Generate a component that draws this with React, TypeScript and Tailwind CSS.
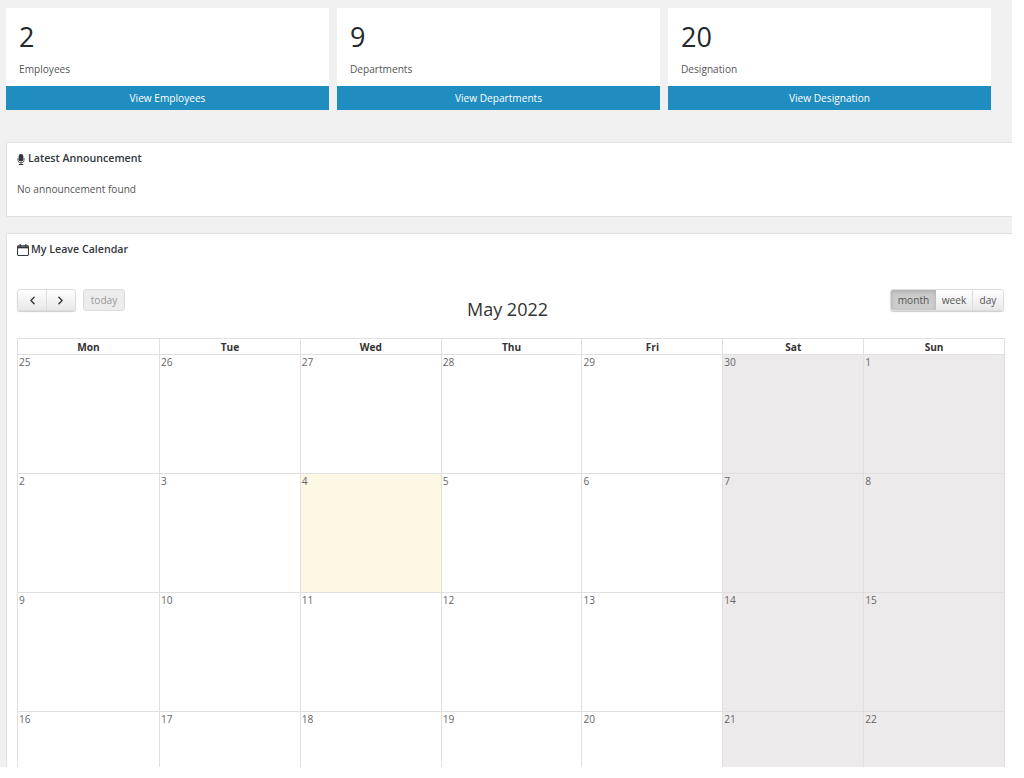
import { ChevronLeft, ChevronRight } from 'lucide-react';

const stats = [
    { count: '2', label: 'Employees', action: 'View Employees' },
    { count: '9', label: 'Departments', action: 'View Departments' },
    { count: '20', label: 'Designation', action: 'View Designation' },
];

const days = ['Mon', 'Tue', 'Wed', 'Thu', 'Fri', 'Sat', 'Sun'];

const weeks = [
    ['25', '26', '27', '28', '29', '30', '1'],
    ['2', '3', '4', '5', '6', '7', '8'],
    ['9', '10', '11', '12', '13', '14', '15'],
    ['16', '17', '18', '19', '20', '21', '22'],
];

function MicIcon() {
    return (
        <svg viewBox="0 0 10 14" className="w-[8px] h-[11px] fill-[#32373c] shrink-0">
            <rect x="2" y="0" width="6" height="9.6" rx="3" />
            <path d="M0.6 5.4h1v1.8a3.4 3.4 0 0 0 6.8 0V5.4h1v1.8a4.4 4.4 0 0 1-3.8 4.3v1.3h2.2V14H2.2v-1.2h2.2v-1.3A4.4 4.4 0 0 1 0.6 7.2z" />
        </svg>
    );
}

function CalendarIcon() {
    return (
        <svg viewBox="0 0 13 13" className="w-[12px] h-[12px] fill-none stroke-[#32373c] shrink-0">
            <rect x="0.6" y="2" width="11.8" height="10.4" rx="1" strokeWidth="1.1" />
            <path d="M0.6 3.6h11.8" strokeWidth="2.2" />
            <path d="M3.5 0.2v2.6M9.5 0.2v2.6" strokeWidth="1.6" />
        </svg>
    );
}

export default function App() {
    return (
        <div className="w-[1024px] h-[778px] bg-white overflow-hidden font-['Open_Sans',sans-serif] antialiased">
            <div className="w-[1012px] h-[767px] bg-[#f0f0f0] overflow-hidden pl-[6px] pt-[8px]">
                <div className="flex gap-[8px]">
                    {stats.map((stat) => (
                        <div key={stat.label} className="w-[323px] h-[102px] bg-white flex flex-col">
                            <div className="flex-1 pl-[13px]">
                                <div className="text-[27px] leading-[37px] pt-[10px] h-[48px] font-medium text-[#23282d]">{stat.count}</div>
                                <div className="text-[10.15px] leading-[14px] mt-[6px] text-[#555]">{stat.label}</div>
                            </div>
                            <div className="h-[24px] bg-[#1f8dbf] text-white text-[10.15px] leading-[24px] text-center">{stat.action}</div>
                        </div>
                    ))}
                </div>

                <div className="mt-[32px] h-[75px] bg-white border border-[#e0e0e6] border-r-0 pl-[10px]">
                    <div className="flex items-center gap-[3px] h-[14px] mt-[9px] text-[10.65px] font-semibold text-[#32373c]">
                        <MicIcon />
                        <span>Latest Announcement</span>
                    </div>
                    <p className="mt-[16px] text-[10.15px] leading-[14px] text-[#555]">No announcement found</p>
                </div>

                <div className="mt-[16px] bg-white border border-[#e0e0e6] border-r-0 pl-[10px]">
                    <div className="flex items-center gap-[2px] h-[14px] mt-[9px] text-[10.65px] font-semibold text-[#32373c]">
                        <CalendarIcon />
                        <span>My Leave Calendar</span>
                    </div>

                    <div className="flex justify-between items-start w-[987px] mt-[32px] h-[49px]">
                        <div className="flex gap-[7px]">
                            <div className="flex h-[22px] rounded-[3px] border border-[#dddddd] shadow-[0_1px_1px_rgba(0,0,0,0.2)] bg-gradient-to-b from-white to-[#e8e8e8]">
                                <button className="w-[29px] flex items-center justify-center border-r border-[#dddddd]">
                                    <ChevronLeft size={13} strokeWidth={2.5} className="text-[#333]" />
                                </button>
                                <button className="w-[28px] flex items-center justify-center pr-[1px]">
                                    <ChevronRight size={13} strokeWidth={2.5} className="text-[#333]" />
                                </button>
                            </div>
                            <button className="h-[22px] w-[42px] pt-[1px] rounded-[3px] border border-[#dcdcdc] bg-[#ececec] text-[10.15px] text-[#999]">today</button>
                        </div>
                        <h2 className="mt-[8px] text-[18px] leading-[25px] text-[#333]">May 2022</h2>
                        <div className="flex h-[22px] rounded-[3px] border border-[#dddddd] shadow-[0_1px_1px_rgba(0,0,0,0.2)] text-[10.15px] text-[#555] overflow-hidden">
                            <button className="w-[45px] pt-[1px] bg-[#cccccc] shadow-[inset_0_2px_4px_rgba(0,0,0,0.15)]">month</button>
                            <button className="w-[37px] pt-[1px] border-r border-[#dddddd] bg-gradient-to-b from-white to-[#e8e8e8]">week</button>
                            <button className="w-[30px] pt-[1px] bg-gradient-to-b from-white to-[#e8e8e8]">day</button>
                        </div>
                    </div>

                    <div className="w-[988px] border-l border-t border-[#e0e0e0]">
                        <div className="grid grid-cols-[142px_repeat(6,minmax(0,1fr))] h-[16px] border-b border-[#e0e0e0]">
                            {days.map((day) => (
                                <div key={day} className="border-r border-[#e0e0e0] text-center text-[10.15px] leading-[16px] font-bold text-[#333]">{day}</div>
                            ))}
                        </div>
                        {weeks.map((week) => (
                            <div key={week[0]} className="grid grid-cols-[142px_repeat(6,minmax(0,1fr))] h-[119px] border-b border-[#e0e0e0]">
                                {week.map((date, i) => (
                                    <div
                                        key={date}
                                        className={`border-r border-[#e0e0e0] pl-[1px] text-[10.15px] leading-[15px] text-[#666] ${date === '4' ? 'bg-[#fcf8e3]' : i > 4 ? 'bg-[#eceaea]' : ''}`}
                                    >
                                        {date}
                                    </div>
                                ))}
                            </div>
                        ))}
                    </div>
                </div>
            </div>
        </div>
    );
}
